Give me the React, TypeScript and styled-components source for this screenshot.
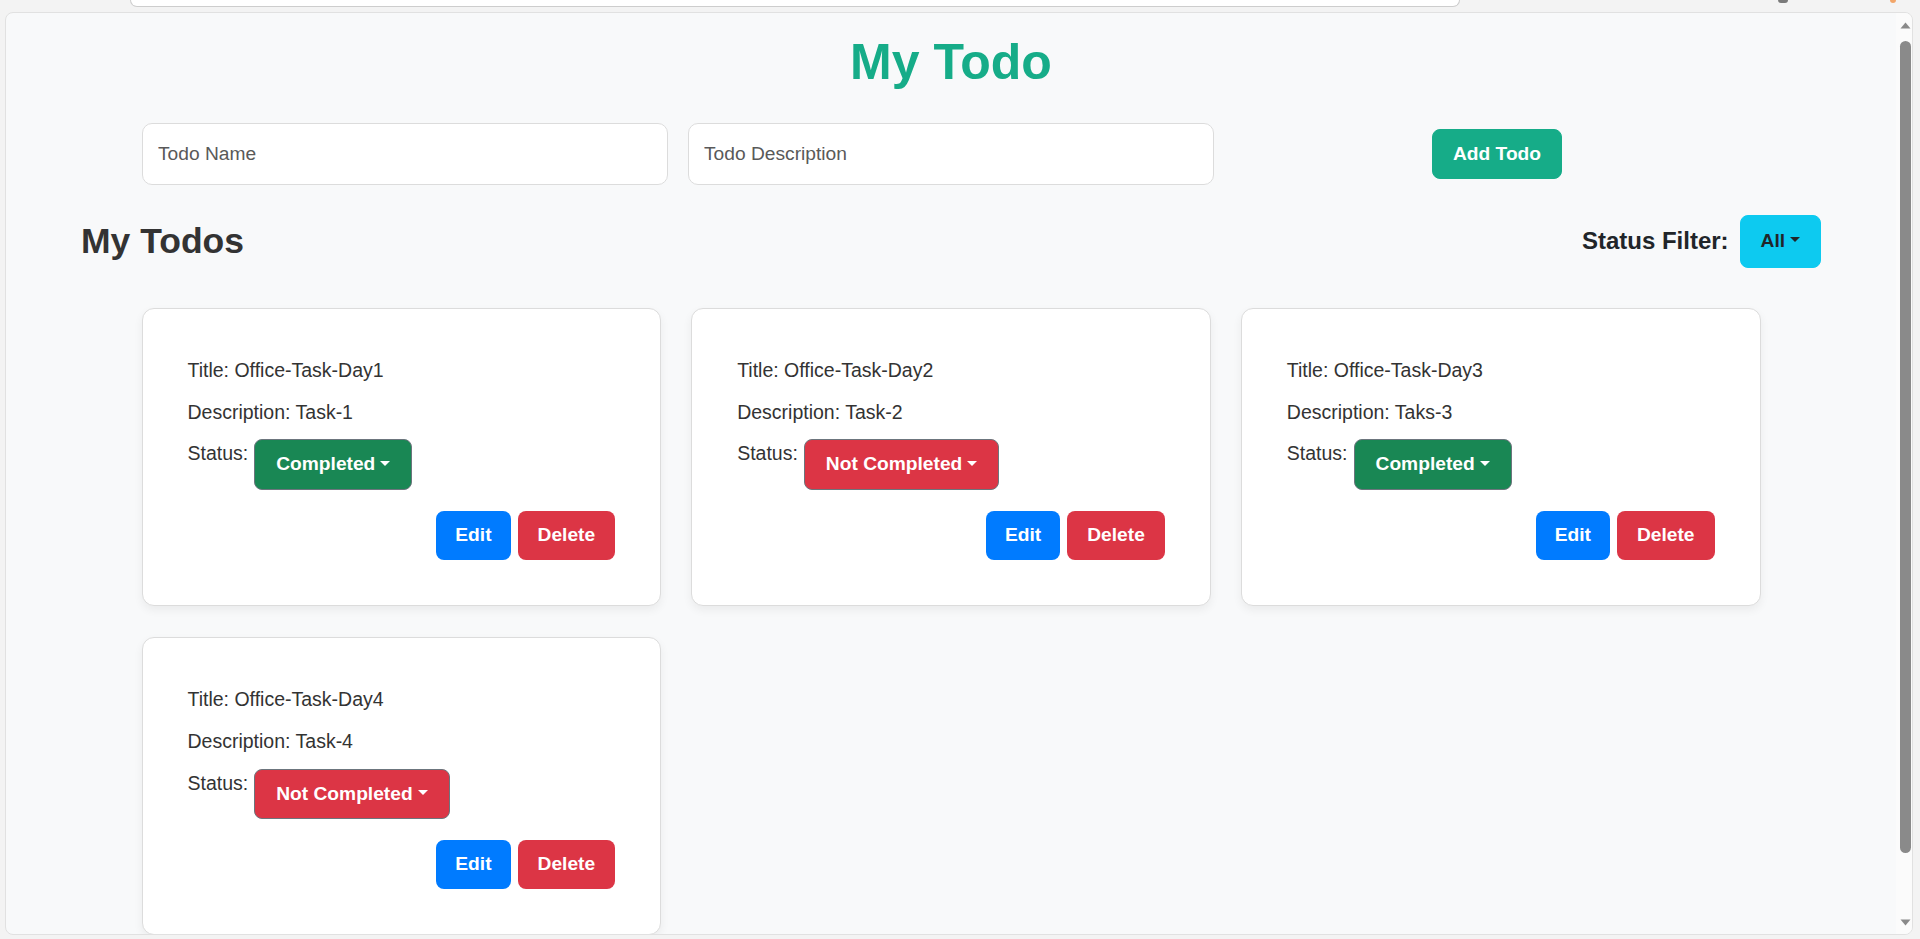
import React from 'react';
import styled, { createGlobalStyle } from 'styled-components';

const GlobalStyle = createGlobalStyle`
  html, body { margin: 0; padding: 0; }
  body {
    background: #f3f3f3;
    font-family: "Liberation Sans", Arial, Helvetica, sans-serif;
    overflow: hidden;
  }
  * { box-sizing: border-box; }
`;

const Window = styled.div`
  height: 939px;
  display: flex;
  flex-direction: column;
  padding: 0 7px 4px 5px;
`;

const ChromeBar = styled.div`
  height: 12px;
  flex: none;
  display: flex;
  align-items: flex-start;
`;

const AddressBar = styled.div`
  margin-left: 125px;
  width: 1330px;
  height: 7px;
  background: #ffffff;
  border: 1px solid #cdcdcd;
  border-top: none;
  border-radius: 0 0 12px 12px;
`;

const ToolbarDot = styled.div<{ $color: string; $offset: number; $w: number }>`
  margin-left: ${(p) => p.$offset}px;
  width: ${(p) => p.$w}px;
  height: 3px;
  background: ${(p) => p.$color};
  border-radius: 0 0 5px 5px;
`;

const Frame = styled.div`
  flex: 1;
  min-height: 0;
  display: flex;
  background: #f8f9fa;
  border: 1px solid #e1e1e1;
  border-radius: 8px;
  overflow: hidden;
`;

const Viewport = styled.div`
  flex: 1;
  min-width: 0;
  overflow: hidden;
`;

const ScrollTrack = styled.div`
  width: 16px;
  flex: none;
  background: #fbfbfb;
  display: flex;
  flex-direction: column;
  align-items: center;
  padding-left: 3px;
`;

const ArrowIcon = styled.svg<{ $top: number; $bottom: number }>`
  display: block;
  margin-top: ${(p) => p.$top}px;
  margin-bottom: ${(p) => p.$bottom}px;
  flex: none;
`;

const Thumb = styled.div`
  width: 11px;
  height: 812px;
  margin-top: 12px;
  margin-bottom: auto;
  background: #8a8a8a;
  border-radius: 6px;
`;

const Title = styled.h1`
  margin: 19px 0 0;
  text-align: center;
  font-size: 50px;
  line-height: 60px;
  font-weight: 700;
  color: #16ac88;
`;

const InputRow = styled.div`
  width: 1618px;
  margin: 31px auto 0;
  display: grid;
  grid-template-columns: repeat(3, 1fr);
  gap: 20px;
  align-items: center;
`;

const TextInput = styled.input`
  height: 62px;
  width: 100%;
  padding: 0 15px;
  font-family: inherit;
  font-size: 19.2px;
  color: #333;
  background: #ffffff;
  border: 1px solid #dcdcdc;
  border-radius: 10px;
  outline: none;
  &::placeholder { color: #595959; }
`;

const ButtonCell = styled.div`
  display: flex;
  justify-content: center;
`;

const Button = styled.button<{ $bg: string; $fg?: string; $border?: string }>`
  font-family: inherit;
  font-size: 19.2px;
  line-height: 28.8px;
  font-weight: 700;
  color: ${(p) => p.$fg || '#ffffff'};
  background: ${(p) => p.$bg};
  border: 1px solid ${(p) => p.$border || p.$bg};
  border-radius: 8px;
  padding: 10px 20px;
  cursor: pointer;
  white-space: nowrap;
`;

const Caret = styled.span`
  display: inline-block;
  margin-left: 0.255em;
  vertical-align: 0.255em;
  border-top: 0.3em solid;
  border-right: 0.3em solid transparent;
  border-left: 0.3em solid transparent;
  border-bottom: 0;
`;

const HeaderRow = styled.div`
  width: 1740px;
  margin: 30px auto 0;
  display: flex;
  justify-content: space-between;
  align-items: center;
`;

const SectionTitle = styled.h2`
  margin: 0;
  font-size: 35.5px;
  line-height: 42px;
  font-weight: 700;
  color: #333333;
`;

const FilterGroup = styled.div`
  display: flex;
  align-items: center;
  gap: 11px;
`;

const FilterLabel = styled.span`
  font-size: 24px;
  font-weight: 700;
  color: #212529;
`;

const FilterButton = styled(Button)`
  padding: 11px 20px;
`;

const CardGrid = styled.div`
  width: 1619px;
  margin: 40px auto 0;
  display: grid;
  grid-template-columns: repeat(3, 1fr);
  column-gap: 30px;
  row-gap: 31px;
`;

const Card = styled.div`
  background: #ffffff;
  border: 1px solid #dcdcdc;
  border-radius: 12px;
  padding: 47px 45px 45px;
  box-shadow: 0 4px 10px rgba(0, 0, 0, 0.06);
  font-size: 19.5px;
  line-height: 28.8px;
  color: #333333;
`;

const Line = styled.p`
  margin: 0 0 13px;
`;

const StatusRow = styled.div`
  display: flex;
  align-items: flex-start;
`;

const StatusLabel = styled.span`
  margin-right: 6px;
`;

const StatusButton = styled(Button)`
  padding: 10px 21px;
`;

const Actions = styled.div`
  margin-top: 21px;
  display: flex;
  justify-content: flex-end;
  gap: 7px;
`;

const ActionButton = styled(Button)<{ $px?: number }>`
  border: none;
  padding: 10px ${(p) => p.$px ?? 20}px;
`;

type Todo = { title: string; description: string; done: boolean };

const todos: Todo[] = [
  { title: 'Office-Task-Day1', description: 'Task-1', done: true },
  { title: 'Office-Task-Day2', description: 'Task-2', done: false },
  { title: 'Office-Task-Day3', description: 'Taks-3', done: true },
  { title: 'Office-Task-Day4', description: 'Task-4', done: false },
];

const TodoCard: React.FC<{ todo: Todo }> = ({ todo }) => (
  <Card>
    <Line>Title: {todo.title}</Line>
    <Line>Description: {todo.description}</Line>
    <StatusRow>
      <StatusLabel>Status:</StatusLabel>
      <StatusButton $bg={todo.done ? '#198754' : '#dc3545'} $border="#6c757d">
        {todo.done ? 'Completed' : 'Not Completed'}
        <Caret />
      </StatusButton>
    </StatusRow>
    <Actions>
      <ActionButton $bg="#007bff" $px={19}>Edit</ActionButton>
      <ActionButton $bg="#dc3545" $px={20}>Delete</ActionButton>
    </Actions>
  </Card>
);

export default function App() {
  return (
    <>
      <GlobalStyle />
      <Window>
        <ChromeBar>
          <AddressBar />
          <ToolbarDot $color="#7a7a7a" $offset={318} $w={10} />
          <ToolbarDot $color="#f2a66a" $offset={102} $w={6} />
        </ChromeBar>
        <Frame>
          <Viewport>
            <Title>My Todo</Title>
            <InputRow>
              <TextInput placeholder="Todo Name" />
              <TextInput placeholder="Todo Description" />
              <ButtonCell>
                <Button $bg="#16ac88">Add Todo</Button>
              </ButtonCell>
            </InputRow>
            <HeaderRow>
              <SectionTitle>My Todos</SectionTitle>
              <FilterGroup>
                <FilterLabel>Status Filter:</FilterLabel>
                <FilterButton $bg="#0dcaf0" $fg="#212529">
                  All
                  <Caret />
                </FilterButton>
              </FilterGroup>
            </HeaderRow>
            <CardGrid>
              {todos.map((t) => (
                <TodoCard key={t.title} todo={t} />
              ))}
            </CardGrid>
          </Viewport>
          <ScrollTrack>
            <ArrowIcon $top={9} $bottom={0} width="11" height="7" viewBox="0 0 11 7">
              <path d="M5.5 0.5 L10.5 6.5 L0.5 6.5 Z" fill="#8a8a8a" />
            </ArrowIcon>
            <Thumb />
            <ArrowIcon $top={0} $bottom={8} width="11" height="7" viewBox="0 0 11 7">
              <path d="M0.5 0.5 L10.5 0.5 L5.5 6.5 Z" fill="#8a8a8a" />
            </ArrowIcon>
          </ScrollTrack>
        </Frame>
      </Window>
    </>
  );
}
